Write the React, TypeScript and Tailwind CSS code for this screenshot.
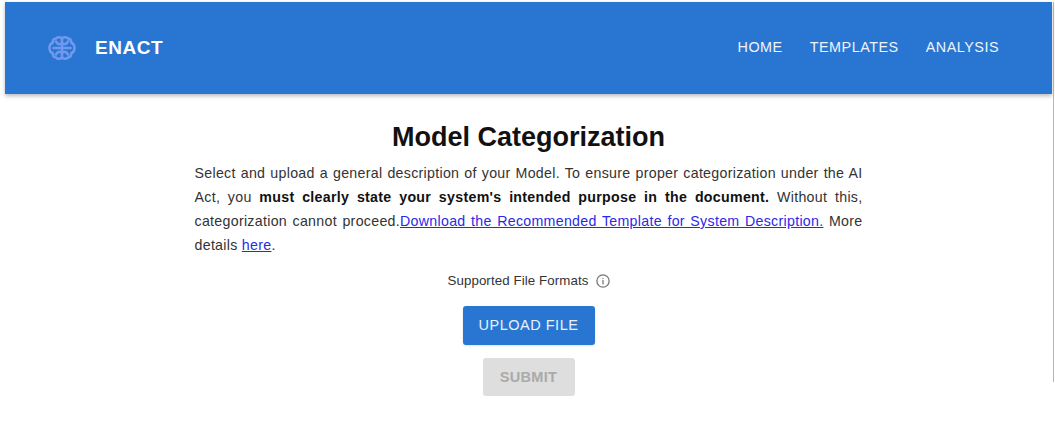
const navLinks = ["HOME", "TEMPLATES", "ANALYSIS"];

function BrainLogo() {
  return (
    <svg width="28" height="26" viewBox="0 0 28 26" fill="none" stroke="#7099ee" strokeWidth="2.600" strokeLinecap="round" strokeLinejoin="round">
      <path d="M14 3.500v19" />
      <path d="M14 3.500c-1-1.500-4.500-2-6 0-2.500 0-3.500 2-3 4C2.500 8.500 1.500 11 1.500 13s1 4.500 3.500 5.500c-.5 2 .5 4 3 4 1.500 2 5 1.500 6 0 1 1.500 4.500 2 6 0 2.500 0 3.500-2 3-4 2.500-1 3.500-3.500 3.500-5.500s-1-4.500-3.500-5.500c.5-2-.5-4-3-4-1.500-2-5-1.500-6 0z" />
      <path d="M14 9h-4l-2-2.500M14 13H5.500M14 17h-4l-2 2.500" />
      <path d="M14 9h4l2-2.500M14 13h8.500M14 17h4l2 2.500" />
    </svg>
  );
}

function InfoIcon() {
  return (
    <svg width="14" height="14" viewBox="0 0 24 24" fill="none" stroke="#777" strokeWidth="2.200" strokeLinecap="round">
      <circle cx="12" cy="12" r="10.500" />
      <path d="M12 11v6M12 7.500v.01" />
    </svg>
  );
}

export default function App() {
  return (
    <div className="flex h-[421px] w-[1055px] items-start overflow-hidden bg-white pt-[2px] pl-[5px] font-['Liberation_Sans',sans-serif]">
      <div className="w-[1047px]">
        <header className="flex h-[92px] items-center justify-between bg-[#2976d2] pr-[53px] pl-[43px] shadow-[0_2px_4px_rgba(0,0,0,0.28)]">
          <div className="flex items-center gap-[19px]">
            <BrainLogo />
            <span className="text-[19px] font-bold tracking-[0.55px] text-white">ENACT</span>
          </div>
          <nav className="flex items-center gap-[27px]">
            {navLinks.map((l) => (
              <a key={l} className="text-[14.400px] tracking-[0.5px] text-[#eef4fb]">
                {l}
              </a>
            ))}
          </nav>
        </header>

        <main className="flex flex-col items-center">
          <h1 className="mt-[25px] text-[27px] leading-[36px] font-bold text-[#111]">Model Categorization</h1>
          <p className="mt-[6px] w-[668px] text-justify text-[14.200px] leading-[24px] tracking-[0.3px] text-[#333]">
            Select and upload a general description of your Model. To ensure proper categorization under the AI Act, you{" "}
            <b className="font-bold text-[#111]">must clearly state your system's intended purpose in the document.</b>{" "}
            Without this, categorization cannot proceed.
            <a className="text-[#2a2ae6] underline">Download the Recommended Template for System Description.</a> More
            details <a className="text-[#2a2ae6] underline">here</a>.
          </p>
          <div className="mt-[14px] flex items-center gap-[7px] text-[13.300px] leading-[20px] tracking-[0.1px] text-[#333]">
            <span>Supported File Formats</span>
            <InfoIcon />
          </div>
          <button className="mt-[15px] h-[39px] w-[132px] rounded-[3px] bg-[#2976d2] text-[14.500px] tracking-[0.5px] text-[#e8f1fb] shadow-sm">
            UPLOAD FILE
          </button>
          <button className="mt-[13px] h-[38px] w-[92px] rounded-[3px] bg-[#dedede] pt-[1px] text-[14.500px] font-bold tracking-[0.3px] text-[#aaa]">
            SUBMIT
          </button>
        </main>
      </div>
      <div className="ml-[1px] h-[380px] w-[1px] bg-[#b5b5b5]" />
    </div>
  );
}
